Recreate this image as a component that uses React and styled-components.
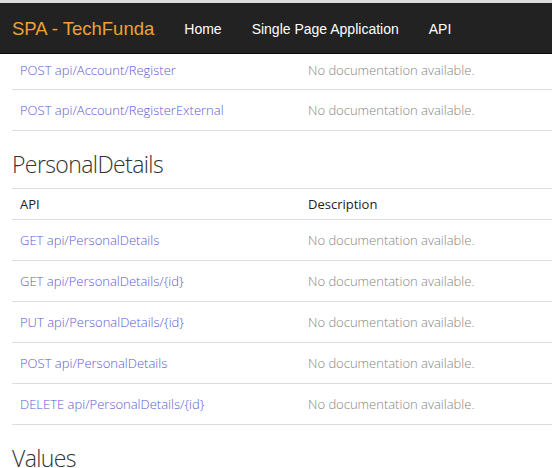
import React from "react"
import styled, { createGlobalStyle } from "styled-components"

const GlobalStyle = createGlobalStyle`
    *, *::before, *::after {
        box-sizing: border-box;
    }
    html, body {
        margin: 0;
        padding: 0;
        background: #fff;
        overflow: hidden;
    }
    body {
        font-family: "Open Sans", "Noto Sans", sans-serif;
        color: #333;
    }
`

const Page = styled.div`
    width: 552px;
    height: 468px;
    overflow: hidden;
    border-top: 3px solid #dcdcdc;
`

const Navbar = styled.nav`
    display: flex;
    align-items: center;
    height: 51px;
    padding: 1px 12px 0;
    background: #222;
    border-bottom: 1px solid #080808;
    font-family: "Liberation Sans", Arial, sans-serif;
`

const Brand = styled.a`
    font-size: 18.5px;
    color: #f0a030;
    text-decoration: none;
    margin-right: 15px;
`

const NavLink = styled.a`
    font-size: 14px;
    color: #fff;
    padding: 0 15px;
    text-decoration: none;
`

const Content = styled.main`
    padding-left: 12px;
`

const Heading = styled.h2`
    margin: 19px 0 10px;
    font-size: 23px;
    line-height: 28px;
    font-weight: 300;
    letter-spacing: -0.6px;
    color: #333;
`

const Table = styled.div`
    display: grid;
    grid-template-columns: 288px 1fr;
    border-bottom: 1px solid #ddd;
`

const Cell = styled.div`
    display: flex;
    align-items: center;
    height: ${p => (p.$head ? "31px" : p.$short ? "35px" : "41px")};
    padding: ${p => (p.$short ? "0 8px 3px" : "0 8px")};
    border-top: ${p => (p.$first ? "none" : "1px solid #ddd")};
    font-size: 13px;
    font-weight: ${p => (p.$head ? 400 : 300)};
    color: ${p => (p.$head ? "#222" : p.$link ? "#5b5bd6" : "#858585")};
    white-space: nowrap;
`

const Row = ({ api, doc, head, first, short }) => (
    <>
        <Cell $link={!head} $head={head} $first={first} $short={short}>{api}</Cell>
        <Cell $head={head} $first={first} $short={short}>{doc}</Cell>
    </>
)

const NO_DOC = "No documentation available."

const personal = [
    "GET api/PersonalDetails",
    "GET api/PersonalDetails/{id}",
    "PUT api/PersonalDetails/{id}",
    "POST api/PersonalDetails",
    "DELETE api/PersonalDetails/{id}",
]

export default function App() {
    return (
        <Page>
            <GlobalStyle />
            <Navbar>
                <Brand>SPA - TechFunda</Brand>
                <NavLink>Home</NavLink>
                <NavLink>Single Page Application</NavLink>
                <NavLink>API</NavLink>
            </Navbar>
            <Content>
                <Table>
                    <Row api="POST api/Account/Register" doc={NO_DOC} first short />
                    <Row api="POST api/Account/RegisterExternal" doc={NO_DOC} />
                </Table>
                <Heading>PersonalDetails</Heading>
                <Table>
                    <Row api="API" doc="Description" head />
                    {personal.map(api => (
                        <Row key={api} api={api} doc={NO_DOC} />
                    ))}
                </Table>
                <Heading>Values</Heading>
            </Content>
        </Page>
    )
}
